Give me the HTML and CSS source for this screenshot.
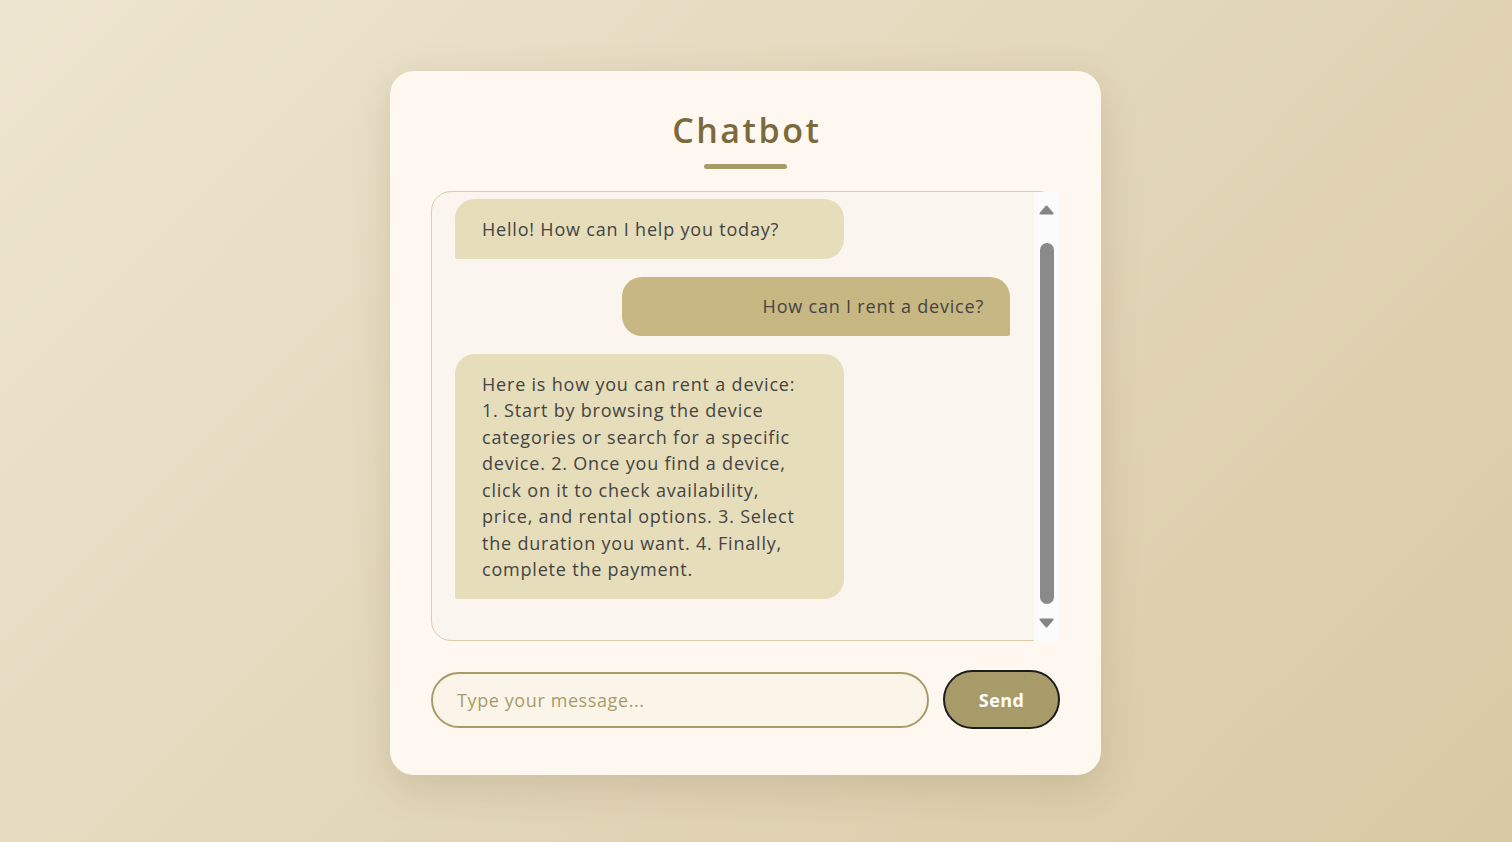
FILE: index.html
```html
<!DOCTYPE html>
<html lang="en">
<head>
<meta charset="utf-8">
<title>Chatbot</title>
<link rel="stylesheet" href="styles.css">
</head>
<body>
  <main class="card">
    <h1 class="title">Chatbot</h1>
    <div class="title-bar"></div>
    <section class="chat-box">
      <div class="messages">
        <div class="msg bot">Hello! How can I help you today?</div>
        <div class="msg user">How can I rent a device?</div>
        <div class="msg bot">Here is how you can rent a device:<br>1. Start by browsing the device<br>categories or search for a specific<br>device. 2. Once you find a device,<br>click on it to check availability,<br>price, and rental options. 3. Select<br>the duration you want. 4. Finally,<br>complete the payment.</div>
      </div>
      <div class="scrollbar">
        <svg class="arrow" width="15" height="10" viewBox="0 0 15 10"><polygon points="7.5,1.5 13.5,8.5 1.5,8.5" fill="#858585" stroke="#858585" stroke-width="2" stroke-linejoin="round"/></svg>
        <div class="thumb"></div>
        <svg class="arrow" width="15" height="10" viewBox="0 0 15 10"><polygon points="1.5,1.5 13.5,1.5 7.5,8.5" fill="#858585" stroke="#858585" stroke-width="2" stroke-linejoin="round"/></svg>
      </div>
    </section>
    <form class="input-row" onsubmit="return false;">
      <input class="msg-input" type="text" placeholder="Type your message...">
      <button class="send-btn" type="button">Send</button>
    </form>
  </main>
</body>
</html>
```
FILE: styles.css
```css
* { box-sizing: border-box; }

html, body { margin: 0; height: 100%; }

body {
  font-family: "Open Sans", "Noto Sans", sans-serif;
  background: linear-gradient(135deg, #eee5d0 0%, #e3d7ba 50%, #d9c9a4 100%);
  display: flex;
  justify-content: center;
  align-items: flex-start;
  padding: 71px 21px 0 0;
  overflow: hidden;
}

.card {
  width: 711px;
  height: 704px;
  background: #fff8f0;
  border-radius: 24px;
  box-shadow: 0 12px 40px rgba(90, 70, 30, 0.16);
  padding: 39px 41px 46px;
  display: flex;
  flex-direction: column;
  align-items: center;
}

.title {
  margin: 0;
  font-size: 34px;
  line-height: 40px;
  font-weight: 600;
  letter-spacing: 2.5px;
  color: #7a6a3d;
  text-align: center;
  padding-left: 2.5px;
}

.title-bar {
  width: 83px;
  height: 5px;
  border-radius: 3px;
  background: #a89b6a;
  margin-top: 14px;
  margin-bottom: 22px;
}

.chat-box {
  width: 628px;
  height: 450px;
  align-self: flex-start;
  border: 1px solid #dccda6;
  border-radius: 20px;
  background: #faf5ee;
  display: flex;
}

.messages {
  flex: 1;
  overflow: hidden;
  padding: 7px 24px 0 23px;
  display: flex;
  flex-direction: column;
  gap: 18px;
}

.msg {
  width: 70%;
  padding: 16.5px 27px;
  font-size: 18px;
  line-height: 26.5px;
  letter-spacing: 0.8px;
  color: #444444;
}

.msg.bot {
  align-self: flex-start;
  background: #e6ddba;
  border-radius: 20px 20px 20px 2px;
}

.msg.user {
  align-self: flex-end;
  background: #c6b783;
  border-radius: 20px 20px 2px 20px;
  text-align: right;
  padding-right: 26px;
}

.scrollbar {
  width: 25px;
  margin-right: -1px;
  margin-bottom: -1px;
  background: #fbfbfb;
  display: flex;
  flex-direction: column;
  align-items: center;
  padding-top: 13px;
}

.arrow { display: block; }

.thumb {
  width: 14px;
  height: 361px;
  border-radius: 7px;
  background: #8a8a8a;
  margin: 28px 0 14px;
}

.input-row {
  width: 629px;
  align-self: flex-start;
  margin: 29px 0 0;
  display: flex;
  align-items: center;
  gap: 14px;
}

.msg-input {
  flex: 1;
  height: 56px;
  border: 2px solid #a89b6a;
  border-radius: 28px;
  background: #fbf5e9;
  padding: 0 24px;
  font-family: "Open Sans", "Noto Sans", sans-serif;
  font-size: 18px;
  letter-spacing: 0.6px;
  color: #474747;
  outline: none;
}

.msg-input::placeholder {
  color: #a89b6a;
}

.send-btn {
  width: 117px;
  height: 59px;
  border: 2px solid #1c1c1c;
  border-radius: 30px;
  background: #a89b6a;
  color: #ffffff;
  font-family: "Open Sans", "Noto Sans", sans-serif;
  font-size: 18px;
  font-weight: 700;
  letter-spacing: 0.4px;
  padding: 0;
}
```
